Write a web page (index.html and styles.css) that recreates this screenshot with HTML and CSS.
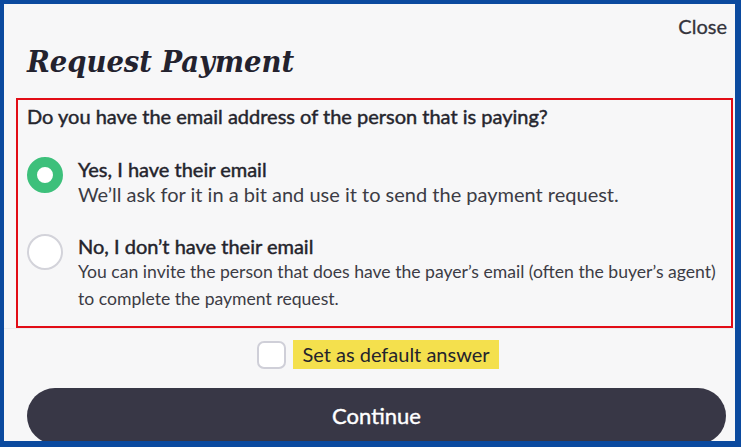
FILE: index.html
```html
<!DOCTYPE html>
<html lang="en">
<head>
<meta charset="utf-8">
<title>Request Payment</title>
<link rel="stylesheet" href="styles.css">
</head>
<body>
<div class="frame">
  <div class="sheet">
    <header class="top">
      <button class="close" type="button">Close</button>
    </header>
    <h1 class="title">Request Payment</h1>
    <section class="question-box">
      <p class="question">Do you have the email address of the person that is paying?</p>
      <div class="options">
        <label class="option">
          <span class="radio radio-on"></span>
          <span class="option-text">
            <span class="option-title">Yes, I have their email</span>
            <span class="option-desc">We’ll ask for it in a bit and use it to send the payment request.</span>
          </span>
        </label>
        <label class="option option-second">
          <span class="radio"></span>
          <span class="option-text">
            <span class="option-title">No, I don’t have their email</span>
            <span class="option-desc option-desc-small">You can invite the person that does have the payer’s email (often the buyer’s agent) to complete the payment request.</span>
          </span>
        </label>
      </div>
    </section>
    <footer class="footer">
      <label class="default-row">
        <span class="checkbox"></span>
        <span class="default-label">Set as default answer</span>
      </label>
      <button class="continue" type="button">Continue</button>
    </footer>
  </div>
</div>
</body>
</html>
```
FILE: styles.css
```css
html, body {
  margin: 0;
  padding: 0;
}

body {
  width: 741px;
  height: 447px;
  overflow: hidden;
  font-family: Lato, "Noto Sans", sans-serif;
  color: #2a2a32;
}

.frame {
  box-sizing: border-box;
  width: 741px;
  height: 447px;
  border-style: solid;
  border-color: #0b4a9f;
  border-width: 4px 6px 6px 4px;
  background: #f7f7f8;
  overflow: hidden;
}

.sheet {
  display: flex;
  flex-direction: column;
}

.top {
  display: flex;
  justify-content: flex-end;
  padding: 10px 8px 0 0;
  height: 24px;
}

.close {
  border: 0;
  background: none;
  padding: 0;
  font-family: Lato, "Noto Sans", sans-serif;
  font-size: 20px;
  font-weight: 400;
  -webkit-text-stroke: 0.3px #34343c;
  line-height: 24px;
  color: #34343c;
  cursor: pointer;
}

.title {
  margin: 1px 0 0 23px;
  font-family: "DejaVu Serif", serif;
  font-stretch: condensed;
  font-style: italic;
  font-weight: 700;
  font-size: 30.5px;
  line-height: 44px;
  color: #23222e;
}

.question-box {
  margin: 15px 2px 0 12px;
  border: 2px solid #e20d16;
  padding: 4px 4px 14px 9px;
}

.question {
  margin: 0;
  font-size: 20px;
  line-height: 24px;
  font-weight: 400;
  -webkit-text-stroke: 0.45px #25252d;
  color: #25252d;
}

.options {
  display: flex;
  flex-direction: column;
  gap: 27px;
  margin-top: 29px;
}

.option {
  display: flex;
  gap: 15px;
  align-items: flex-start;
}

.radio {
  box-sizing: border-box;
  flex: none;
  width: 36px;
  height: 36px;
  border-radius: 50%;
  border: 2px solid #d3d3da;
  background: #fff;
}

.radio-on {
  border: 10px solid #3dc07b;
  background: #fff;
}

.option-text {
  display: flex;
  flex-direction: column;
}

.option-title {
  font-size: 20px;
  line-height: 24px;
  font-weight: 400;
  -webkit-text-stroke: 0.45px #24242c;
  color: #24242c;
}

.option-desc {
  font-size: 20px;
  line-height: 26px;
  color: #3c3c45;
}

.option-desc-small {
  font-size: 17.6px;
  line-height: 27px;
}

.footer {
  display: flex;
  flex-direction: column;
  border-top: 1px solid #ececef;
}

.default-row {
  display: flex;
  align-items: center;
  justify-content: center;
  gap: 7px;
  padding-left: 17px;
  margin-top: 11px;
}

.checkbox {
  box-sizing: border-box;
  width: 29px;
  height: 28px;
  border: 2px solid #cfcfd8;
  border-radius: 7px;
  background: #fff;
}

.default-label {
  background: #f4e04d;
  font-size: 20px;
  line-height: 29px;
  padding: 0 9px;
  color: #24242c;
}

.continue {
  margin: 19px 9px 0 23px;
  height: 56px;
  border: 0;
  border-radius: 28px;
  background: #383746;
  color: #fff;
  font-family: Lato, "Noto Sans", sans-serif;
  font-size: 22px;
  font-weight: 400;
  -webkit-text-stroke: 0.4px #fff;
  cursor: pointer;
  padding: 0 0 2px 0;
}
```
